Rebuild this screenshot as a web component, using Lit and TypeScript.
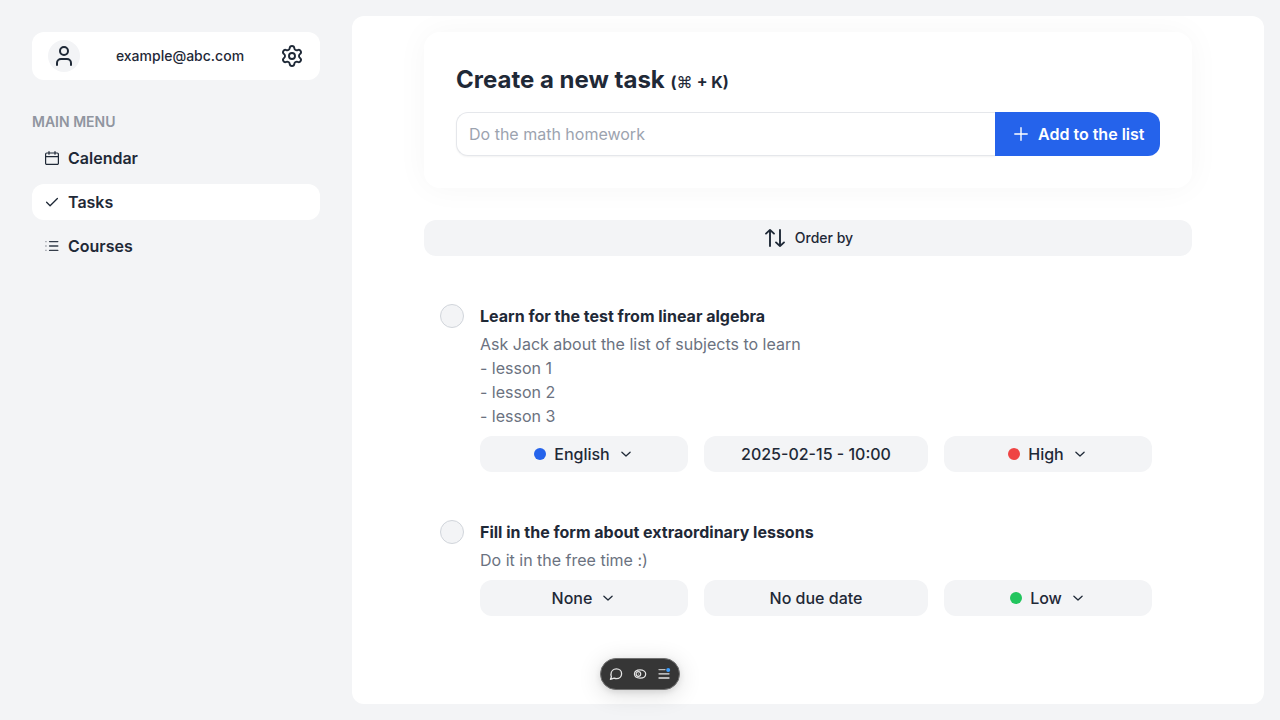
import { LitElement, html, css, svg, nothing } from "lit";
import { customElement, property } from "lit/decorators.js";

const icon = (size: number, box: number, stroke: number, body: unknown) => html`
  <svg width=${size} height=${size} viewBox="0 0 ${box} ${box}" fill="none" stroke="currentColor"
    stroke-width=${stroke} stroke-linecap="round" stroke-linejoin="round" aria-hidden="true">${body}</svg>`;

const user = icon(24, 24, 2, svg`<path d="M19 21v-2a4 4 0 0 0-4-4H9a4 4 0 0 0-4 4v2"/><circle cx="12" cy="7" r="4"/>`);
const gear = icon(24, 24, 1.9, svg`<path d="M9.671 4.136a2.34 2.34 0 0 1 4.659 0 2.34 2.34 0 0 0 3.319 1.915 2.34 2.34 0 0 1 2.33 4.033 2.34 2.34 0 0 0 0 3.831 2.34 2.34 0 0 1-2.33 4.033 2.34 2.34 0 0 0-3.319 1.915 2.34 2.34 0 0 1-4.659 0 2.34 2.34 0 0 0-3.32-1.915 2.34 2.34 0 0 1-2.33-4.033 2.34 2.34 0 0 0 0-3.831A2.34 2.34 0 0 1 6.35 6.051a2.34 2.34 0 0 0 3.319-1.915"/><circle cx="12" cy="12" r="3"/>`);
const calendar = icon(16, 16, 1.2, svg`<path d="M2.8 3h10.4a1.2 1.2 0 0 1 1.2 1.2v9a1.2 1.2 0 0 1-1.2 1.2H2.8a1.2 1.2 0 0 1-1.2-1.2v-9A1.2 1.2 0 0 1 2.8 3ZM1.6 6.6h12.8M5 1.5v2.7M11 1.5v2.7"/>`);
const check = icon(16, 16, 1.3, svg`<path d="M2.6 8.3l3.5 3.5 7.3-7.3"/>`);
const list = icon(16, 16, 1.4, svg`<path d="M5.6 3.6h8.2M5.6 8h8.2M5.6 12.4h8.2" opacity=".9"/><path d="M1.3 3.6h1.3M1.3 8h1.3M1.3 12.4h1.3" stroke-linecap="butt" opacity=".45"/>`);
const plus = icon(16, 16, 1.4, svg`<path d="M8 1.8v12.4M1.8 8h12.4"/>`);
const chevron = icon(16, 16, 1.3, svg`<path d="M3.9 6.3L8 10l4.1-3.7"/>`);
const sort = icon(24, 24, 1.9, svg`<path d="M7 20V4M3 7.6l4-3.7 4 3.7M17 4v16M13 16.4l4 3.7 4-3.7"/>`);

@customElement("task-pill")
export class TaskPill extends LitElement {
  @property() label = "";
  @property() tone = "";
  @property({ type: Boolean }) menu = false;
  static styles = css`
    :host { display: block; min-width: 0; }
    .pill {
      display: flex; align-items: center; justify-content: center; gap: 8px;
      width: 100%; height: 36px; padding: 0; border: 0; border-radius: 12px;
      background: #f3f4f6; color: #1f2937; font: 500 16px/24px Inter, sans-serif;
    }
    .dot { width: 12px; height: 12px; border-radius: 50%; }
    .blue { background: #2563eb; }
    .red { background: #ef4444; }
    .green { background: #22c55e; }
    svg { display: block; }
  `;
  render() {
    return html`<button class="pill">
      ${this.tone ? html`<span class="dot ${this.tone}"></span>` : nothing}
      <span>${this.label}</span>${this.menu ? chevron : nothing}
    </button>`;
  }
}

interface Task {
  title: string; notes: string; course: string; courseTone: string;
  due: string; priority: string; priorityTone: string;
}
const tasks: Task[] = [
  { title: "Learn for the test from linear algebra",
    notes: "Ask Jack about the list of subjects to learn\n- lesson 1\n- lesson 2\n- lesson 3",
    course: "English", courseTone: "blue", due: "2025-02-15 - 10:00", priority: "High", priorityTone: "red" },
  { title: "Fill in the form about extraordinary lessons", notes: "Do it in the free time :)",
    course: "None", courseTone: "", due: "No due date", priority: "Low", priorityTone: "green" },
];

@customElement("app-root")
export class AppRoot extends LitElement {
  static styles = css`
    :host {
      display: block; height: 100vh; background: #f3f4f6; color: #1f2937;
      font: 500 16px/24px Inter, sans-serif; overflow: hidden;
    }
    * { box-sizing: border-box; }
    svg { display: block; flex: none; }
    .layout { display: grid; grid-template-columns: 352px 1fr; height: 100%; }
    .sidebar { padding: 32px; }
    .account {
      display: flex; align-items: center; justify-content: space-between;
      height: 48px; padding: 0 16px; border-radius: 12px; background: #fff; font-size: 14px;
    }
    .avatar { display: grid; place-items: center; width: 32px; height: 32px; border-radius: 50%; background: #f3f4f6; }
    .heading { margin: 32px 0 8px; font-size: 14px; line-height: 20px; font-weight: 600; color: #9095a0; }
    .nav { display: grid; gap: 8px; }
    .link { display: flex; align-items: center; gap: 8px; height: 36px; padding: 0 12px; border-radius: 12px; font-weight: 600; }
    .active { background: #fff; }
    .main { margin: 16px 16px 16px 0; padding: 16px 72px; border-radius: 12px; background: #fff; overflow: hidden; }
    .create { height: 156px; padding: 32px; border-radius: 16px; background: #fff; box-shadow: 0 0 32px rgba(0, 0, 0, .04); }
    .title { height: 32px; margin: 0 0 16px; font-size: 24px; line-height: 32px; font-weight: 700; }
    .hint { font-size: 16px; line-height: 24px; }
    .key { font-weight: 400; letter-spacing: .4px; }
    .entry { display: flex; height: 44px; }
    .field {
      flex: 1; min-width: 0; padding: 0 12px; border: 1px solid #e5e7eb; border-right: 0;
      border-radius: 12px 0 0 12px; font: 400 16px/24px Inter, sans-serif; background: #fff;
      box-shadow: 0 1px 2px rgba(0, 0, 0, .05);
    }
    .field::placeholder { color: #9ca3af; opacity: 1; }
    .add {
      display: flex; align-items: center; gap: 9px; width: 165px; padding: 0 16px 0 18px; border: 0;
      border-radius: 0 12px 12px 0; background: #2563eb; color: #fff; font: 600 16px/24px Inter, sans-serif; white-space: nowrap;
    }
    .order {
      display: flex; align-items: center; justify-content: center; gap: 8px; width: 100%; height: 36px;
      margin: 32px 0; padding: 0; border: 0; border-radius: 12px; background: #f3f4f6; color: #1f2937;
      font: 500 14px/20px Inter, sans-serif;
    }
    .tasks { display: grid; gap: 16px; }
    .task { display: grid; grid-template-columns: 24px 1fr; gap: 16px; padding: 16px 40px 16px 16px; }
    .tick { width: 24px; height: 24px; border: 1px solid #d1d5db; border-radius: 50%; background: #f3f4f6; }
    .name { margin: 0 0 4px; font-size: 16px; line-height: 24px; font-weight: 700; }
    .notes { margin: 0 0 8px; font-weight: 400; color: #6b7280; white-space: pre-line; }
    .pills { display: grid; grid-template-columns: 208px 224px 208px; gap: 16px; }
    .toolbar {
      position: absolute; left: 600px; top: 658px; width: 80px; height: 32px;
      display: flex; align-items: center; justify-content: center; gap: 8px;
      border-radius: 16px; border: 1px solid #707070; background: #363636; color: #e5e5e5;
      box-shadow: 0 2px 6px rgba(0, 0, 0, .1), 0 4px 24px rgba(0, 0, 0, .14);
    }
  `;

  render() {
    return html`
      <div class="layout">
        <aside class="sidebar">
          <div class="account"><span class="avatar">${user}</span><span>example@abc.com</span>${gear}</div>
          <h2 class="heading">MAIN MENU</h2>
          <nav class="nav">
            <a class="link">${calendar}Calendar</a>
            <a class="link active">${check}Tasks</a>
            <a class="link">${list}Courses</a>
          </nav>
        </aside>
        <main class="main">
          <section class="create">
            <h1 class="title">Create a new task <span class="hint">(<span class="key">⌘</span> + K)</span></h1>
            <div class="entry">
              <input class="field" placeholder="Do the math homework" />
              <button class="add">${plus}<span>Add to the list</span></button>
            </div>
          </section>
          <button class="order">${sort}<span>Order by</span></button>
          <div class="tasks">
            ${tasks.map((t) => html`
              <article class="task">
                <span class="tick"></span>
                <div>
                  <h3 class="name">${t.title}</h3>
                  <p class="notes">${t.notes}</p>
                  <div class="pills">
                    <task-pill .label=${t.course} .tone=${t.courseTone} .menu=${true}></task-pill>
                    <task-pill .label=${t.due}></task-pill>
                    <task-pill .label=${t.priority} .tone=${t.priorityTone} .menu=${true}></task-pill>
                  </div>
                </div>
              </article>`)}
          </div>
        </main>
      </div>
      <div class="toolbar">
        ${icon(16, 16, 1.3, svg`<path d="M2.4 13.4l1-2.7A5 4.6 0 0 1 3 8.2C3 5 5.4 2.9 8.4 2.9s5.2 2 5.2 4.8-2.2 4.9-5.2 4.9c-.8 0-1.6-.2-2.3-.5Z"/>`)}
        ${icon(16, 16, 1.2, svg`<path d="M2.4 8C2.6 5.5 5 3.9 8 3.9s5.7 1.6 5.7 4.1-2.5 4.1-5.7 4.1S2.6 10.5 2.4 8Z"/><circle cx="6.4" cy="8" r="2.3"/><path d="M6.4 8h.1"/>`)}
        ${icon(16, 16, 1.3, svg`<path d="M3 3.6h6" opacity=".75"/><path d="M3 7.8h10M3 12h10"/><circle cx="12.2" cy="4" r="2" fill="#3b9eff" stroke="none"/>`)}
      </div>`;
  }
}
